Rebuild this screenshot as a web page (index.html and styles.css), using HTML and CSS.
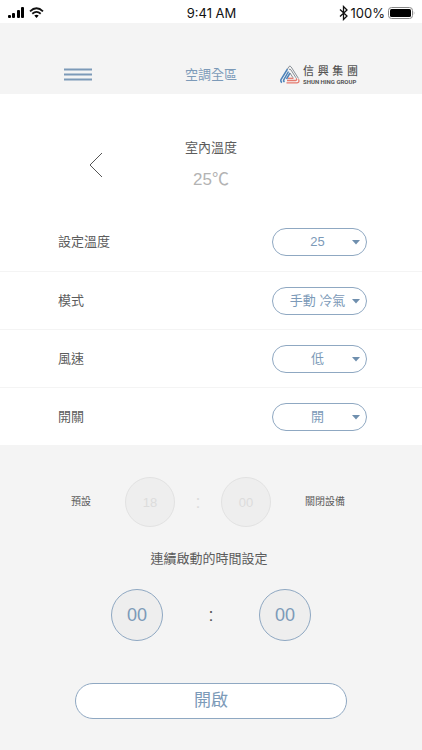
FILE: index.html
```html
<!DOCTYPE html>
<html lang="zh-Hant">
<head>
<meta charset="utf-8">
<meta name="viewport" content="width=device-width, initial-scale=1">
<title>空調全區</title>
<link rel="stylesheet" href="styles.css">
</head>
<body>
<div class="status">
  <div class="status-left">
    <svg width="17" height="12" viewBox="0 0 17 12" aria-hidden="true"><rect x="0" y="8" width="3" height="3" rx="1"/><rect x="4" y="6" width="3" height="5" rx="1"/><rect x="9" y="3" width="3" height="8" rx="1"/><rect x="13" y="0" width="3" height="11" rx="1"/></svg>
    <svg width="15" height="12" viewBox="0 0 15 12" aria-hidden="true"><path d="M1 4.3Q7.500-1.700 14 4.300M3.300 6.700Q7.500 3 11.700 6.700" fill="none" stroke="#111" stroke-width="1.800"/><path d="M5.300 8.600Q7.500 6.800 9.700 8.600L7.500 11Z"/></svg>
  </div>
  <span>9:41 AM</span>
  <div class="status-right">
    <svg width="9" height="16" viewBox="0 0 9 16" aria-hidden="true"><path d="M1 4.500L8 11L4.500 14.500V1.500L8 5L1 11.500" fill="none" stroke="#111" stroke-width="1.300"/></svg>
    <span>100%</span>
    <svg width="27" height="12" viewBox="0 0 27 12" aria-hidden="true"><rect x=".5" y=".5" width="24" height="11" rx="3" fill="#fff" stroke="#888"/><rect x="2" y="2" width="21" height="8" rx="1.500"/><path d="M25.800 4v4q1.200-2 0-4Z" fill="#888"/></svg>
  </div>
</div>

<header class="header">
  <button class="menu" type="button" aria-label="選單">
    <svg width="28" height="13" viewBox="0 0 28 13" aria-hidden="true"><path d="M0 1.500H28M0 6.500H28M0 11.500H28" stroke="#7c9ab8" stroke-width="2"/></svg>
  </button>
  <h1 class="title">空調全區</h1>
  <div class="brand">
    <svg width="20" height="19" viewBox="0 0 20 19" fill="none" aria-hidden="true">
      <g stroke="#4d83b9" stroke-width="1.500"><path d="M7.500 4L1 14.500Q.3 16.500 2 17.500"/><path d="M8.500 6.500L4 14.300Q3 16 4.500 17"/><path d="M10 8L6.500 14"/></g>
      <g stroke="#8a9097" stroke-width="1"><path d="M7.500 4L9 1.500Q10 .3 11.200 2L18.500 13.500"/><path d="M9 4.500Q10 3.500 11 5L16 12.800"/><path d="M10 8L13 12.800"/></g>
      <g stroke="#e57a6e" stroke-width="1.300"><path d="M6.500 17.800H17Q20 17.500 18.500 14.300"/><path d="M7 15.500H15.500Q17.300 15.300 16.300 13.300"/><path d="M8 13.300H13.500"/></g>
    </svg>
    <div class="brand-name">
      <div class="brand-zh"><span>信</span><span>興</span><span>集</span><span>團</span></div>
      <div class="brand-en">SHUN HING GROUP</div>
    </div>
  </div>
</header>

<main>
  <section class="indoor">
    <button class="back" type="button" aria-label="返回">
      <svg width="14" height="26" viewBox="0 0 14 26" aria-hidden="true"><path d="M13 1L1 13L13 25" fill="none" stroke="#555" stroke-width="1"/></svg>
    </button>
    <div class="reading">
      <h2 class="heading">室內溫度</h2>
      <p class="temperature">25℃</p>
    </div>
  </section>

  <section class="settings">
    <div class="row">
      <label for="temp">設定溫度</label>
      <div class="picker"><select id="temp"><option>25</option></select><svg class="caret" width="8" height="5" viewBox="0 0 8 5" aria-hidden="true"><path d="M0 0H8L4 4.500Z"/></svg></div>
    </div>
    <div class="row">
      <label for="mode">模式</label>
      <div class="picker"><select id="mode"><option>手動 冷氣</option></select><svg class="caret" width="8" height="5" viewBox="0 0 8 5" aria-hidden="true"><path d="M0 0H8L4 4.500Z"/></svg></div>
    </div>
    <div class="row">
      <label for="fan">風速</label>
      <div class="picker"><select id="fan"><option>低</option></select><svg class="caret" width="8" height="5" viewBox="0 0 8 5" aria-hidden="true"><path d="M0 0H8L4 4.500Z"/></svg></div>
    </div>
    <div class="row">
      <label for="power">開關</label>
      <div class="picker"><select id="power"><option>開</option></select><svg class="caret" width="8" height="5" viewBox="0 0 8 5" aria-hidden="true"><path d="M0 0H8L4 4.500Z"/></svg></div>
    </div>
  </section>

  <section class="timer">
    <div class="preset">
      <label for="preset-hour">預設</label>
      <div class="preset-time">
        <input id="preset-hour" class="dial dial-off" value="18" disabled>
        <span class="colon colon-off">:</span>
        <input id="preset-minute" class="dial dial-off" value="00" disabled>
      </div>
      <label for="preset-minute">關閉設備</label>
    </div>
    <h2 class="heading">連續啟動的時間設定</h2>
    <div class="duration">
      <input class="dial" value="00" aria-label="小時">
      <span class="colon">:</span>
      <input class="dial" value="00" aria-label="分鐘">
    </div>
    <button class="start" type="button">開啟</button>
  </section>
</main>
</body>
</html>
```
FILE: styles.css
```css
* { box-sizing: border-box; }

body {
  margin: 0;
  min-height: 100vh;
  background: #f4f4f4;
  color: #5c5c5c;
  font: 13px/20px "Liberation Sans", "Noto Sans CJK TC", sans-serif;
}

h1, h2, p { margin: 0; font-size: 13px; font-weight: 400; }
button, input, select { font: inherit; color: inherit; }
button { padding: 0; border: 0; background: none; }
svg { display: block; }

.status {
  display: grid;
  grid-template-columns: 1fr auto 1fr;
  align-items: center;
  height: 23px;
  padding: 2px 7px 0 8px;
  background: #fff;
  color: #111;
  font-family: Inter, "Liberation Sans", sans-serif;
}
.status-left, .status-right { display: flex; align-items: center; gap: 4px; }
.status-right { justify-content: flex-end; gap: 3px; }

.header {
  display: grid;
  grid-template-columns: 1fr auto 1fr;
  align-items: center;
  height: 71px;
  padding: 32px 64px 0;
}
.menu { justify-self: start; }
.title { color: #7c9ab8; }
.brand { display: flex; align-items: center; justify-self: end; gap: 3px; }
.brand-name { width: 55px; }
.brand-zh {
  display: flex;
  justify-content: space-between;
  color: #555;
  font-size: 11px;
  font-weight: 500;
  line-height: 13px;
}
.brand-en {
  color: #555;
  font: 700 6px/7px Roboto, sans-serif;
  white-space: nowrap;
}

.indoor {
  display: grid;
  grid-template-columns: 1fr auto 1fr;
  height: 119px;
  padding: 44px 89px 0;
  background: #fff;
}
.back { justify-self: start; align-self: start; margin-top: 14px; }
.reading { text-align: center; }
.temperature {
  margin-top: 12px;
  color: #b3b3b3;
  font-size: 17px;
}

.settings { background: #fff; }
.row {
  display: flex;
  align-items: center;
  justify-content: space-between;
  height: 58px;
  padding: 0 55px 0 58px;
}
.row + .row { border-top: 1px solid #f4f4f4; }

.picker { position: relative; color: #7c9ab8; }
.picker select {
  appearance: none;
  display: block;
  width: 95px;
  height: 28px;
  padding: 0 4px 0 0;
  border: 1px solid #8fa8c2;
  border-radius: 14px;
  background: #fff;
  text-align: center;
  text-align-last: center;
}
.caret {
  position: absolute;
  right: 7px;
  top: 12px;
  fill: #6f8fae;
  pointer-events: none;
}

.timer { padding: 32px 75px; text-align: center; }
.preset {
  display: flex;
  align-items: center;
  justify-content: space-between;
  margin: 0 2px 0 -4px;
  font-size: 10px;
}
.preset-time, .duration { display: flex; align-items: center; justify-content: center; }
.preset-time { gap: 18px; }
.timer .heading { margin: 22px 4px 0 0; }
.duration { gap: 44px; margin-top: 20px; font-size: 18px; }

.dial {
  width: 52px;
  height: 52px;
  padding: 0;
  border: 1px solid #8fa8c2;
  border-radius: 50%;
  background: #eee;
  color: #7c9ab8;
  text-align: center;
}
.dial-off {
  width: 50px;
  height: 50px;
  border-color: #e2e2e2;
  color: #dcdcdc;
  font-size: 13px;
}
.colon { width: 8px; font-size: 18px; }
.colon-off { width: 10px; color: #dcdcdc; }

.start {
  width: 100%;
  height: 36px;
  margin-top: 42px;
  border: 1px solid #8fa8c2;
  border-radius: 18px;
  background: #fff;
  color: #7c9ab8;
  font-size: 17px;
}
```
